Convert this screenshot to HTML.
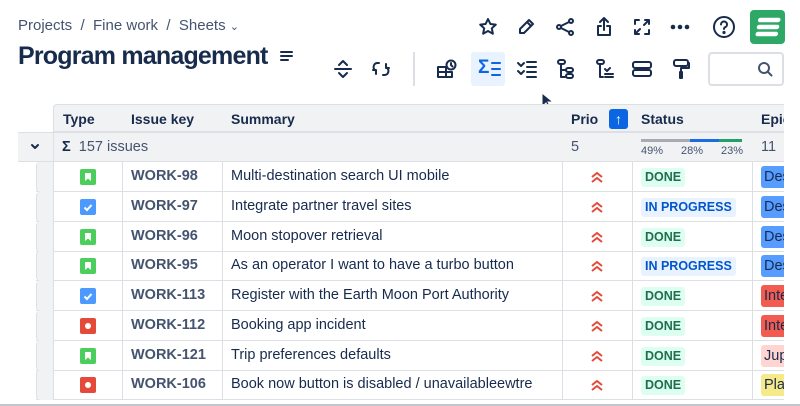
<!DOCTYPE html>
<html><head><meta charset="utf-8"><style>
*{margin:0;padding:0;box-sizing:border-box}
html,body{width:800px;height:406px;overflow:hidden}
body{background:#fff;font-family:"Liberation Sans",sans-serif;color:#172B4D;position:relative}
.a{position:absolute}
svg.i{position:absolute;fill:none;stroke:#172B4D;stroke-width:2;stroke-linecap:round;stroke-linejoin:round}
.hd{position:absolute;top:104px;height:28px;background:#F1F2F4;border-right:1px solid #DCDFE4;border-bottom:1px solid #DCDFE4;font-weight:bold;font-size:14px;line-height:28px;padding-left:9px}
.row{position:absolute;left:36px;width:748px;height:30px;border-bottom:1px solid #DCDFE4}
.c{position:absolute;top:0;height:30px;border-right:1px solid #DCDFE4;font-size:14.5px;line-height:29px;white-space:nowrap}
.key{color:#44546F;font-weight:bold;padding-left:9px}
.lz{font-size:12.5px;font-weight:bold;padding:2px 4px;border-radius:3px;position:absolute;top:6px;left:9px;line-height:15px}
.done{background:#DCFFF1;color:#216E4E}
.prog{background:#E9F2FF;color:#0055CC}
.ep{position:absolute;left:9px;top:4px;width:40px;height:22px;border-radius:3px;font-size:14.5px;line-height:22px;padding-left:3px;color:#172B4D}
</style></head><body>
<div class="a" style="left:18px;top:17px;font-size:15px;color:#44546F">Projects &nbsp;/&nbsp; Fine work &nbsp;/&nbsp; Sheets <span style="font-size:11px">&#8964;</span></div>
<div class="a" style="left:18px;top:42px;font-size:25px;font-weight:bold;letter-spacing:-0.8px">Program management</div>
<svg class="i" style="left:279px;top:48px" width="16" height="16" viewBox="0 0 16 16"><path d="M2 4h11M2 8h11M2 12h7"/></svg>
<svg class="i" style="left:478px;top:17px" width="20" height="20" viewBox="0 0 20 20"><path d="M10 2l2.4 5 5.4.6-4 3.7 1.1 5.4L10 14l-4.9 2.7 1.1-5.4-4-3.7 5.4-.6z"/></svg>
<svg class="i" style="left:516px;top:17px" width="20" height="20" viewBox="0 0 20 20"><path d="M13 3l4 4-9 9H4v-4z M11 5l4 4"/></svg>
<svg class="i" style="left:555px;top:17px" width="20" height="20" viewBox="0 0 20 20"><circle cx="4" cy="10" r="2"/><circle cx="16" cy="4" r="2"/><circle cx="16" cy="16" r="2"/><path d="M6 9l8-4M6 11l8 4"/></svg>
<svg class="i" style="left:594px;top:16px" width="20" height="22" viewBox="0 0 20 22"><path d="M10 2v12M6 6l4-4 4 4M7 10H4v9h12v-9h-3"/></svg>
<svg class="i" style="left:632px;top:17px" width="20" height="20" viewBox="0 0 20 20"><path d="M3 7V3h4M13 3h4v4M17 13v4h-4M7 17H3v-4M4 16l4-4M16 4l-4 4"/></svg>
<svg class="a" style="left:669px;top:23px" width="22" height="8"><circle cx="4" cy="4" r="2.3" fill="#172B4D"/><circle cx="11" cy="4" r="2.3" fill="#172B4D"/><circle cx="18" cy="4" r="2.3" fill="#172B4D"/></svg>
<svg class="i" style="left:712px;top:15px" width="24" height="24" viewBox="0 0 24 24"><circle cx="12" cy="12" r="10"/><path d="M9 9.5a3 3 0 1 1 4 2.8c-.7.3-1 .9-1 1.7"/><circle cx="12" cy="17.5" r=".6" fill="#172B4D"/></svg>
<div class="a" style="left:750px;top:10px;width:35px;height:34px;background:#2EA866;border-radius:4px"></div>
<svg class="a" style="left:750px;top:10px" width="35" height="34" viewBox="0 0 35 34"><path d="M9 10h18M9 17h18M9 24h18" stroke="#fff" stroke-width="4.5" stroke-linecap="round" fill="none" transform="skewX(-10) translate(3 0)"/></svg>
<svg class="i" style="left:333px;top:59px" width="20" height="20" viewBox="0 0 20 20"><path d="M2 10h16M6 6l4-4 4 4M6 14l4 4 4-4"/></svg>
<svg class="i" style="left:371px;top:59px" width="20" height="20" viewBox="0 0 20 20"><path d="M8 4H6a4 4 0 0 0-2 7l1 1M5 15l0-4-3 0"/><path d="M12 16h2a4 4 0 0 0 2-7l-1-1M15 5l0 4 3 0"/></svg>
<div class="a" style="left:413px;top:52px;width:2px;height:34px;background:#DCDFE4"></div>
<svg class="i" style="left:436px;top:58px" width="22" height="22" viewBox="0 0 22 22"><path d="M2 9h8v10H2zM2 14h8M10 14h6v5h-6"/><circle cx="15" cy="7" r="4.5"/><path d="M15 5v2l1.5 1.5"/></svg>
<div class="a" style="left:471px;top:52px;width:34px;height:34px;background:#E9F2FF;border-radius:3px"></div>
<div class="a" style="left:478px;top:57px;font-size:19px;font-weight:bold;color:#0C66E4">&Sigma;</div>
<svg class="i" style="left:490px;top:60px;stroke:#0C66E4" width="12" height="18" viewBox="0 0 12 18"><path d="M2 3h8M2 9h8M2 15h8"/></svg>
<svg class="i" style="left:516px;top:59px" width="22" height="20" viewBox="0 0 22 20"><path d="M2 4l3 3 3-3M2 12l3 3 3-3M11 3h9M11 8h9M11 13h9M11 18h9"/></svg>
<svg class="i" style="left:556px;top:58px" width="20" height="22" viewBox="0 0 20 22"><rect x="2" y="2" width="7" height="4" rx="2"/><path d="M5 6v13h4M5 12h4"/><rect x="10" y="10" width="7" height="4" rx="2"/><rect x="10" y="16" width="7" height="4" rx="2"/></svg>
<svg class="i" style="left:595px;top:58px" width="20" height="22" viewBox="0 0 20 22"><rect x="2" y="2" width="7" height="4" rx="2"/><path d="M5 6v13h3M10 11l2 2 3-3M10 16h8M10 19h8"/></svg>
<svg class="i" style="left:631px;top:59px" width="22" height="20" viewBox="0 0 22 20"><rect x="2" y="3" width="18" height="6" rx="2"/><rect x="2" y="11" width="18" height="6" rx="2"/></svg>
<svg class="i" style="left:671px;top:58px" width="20" height="22" viewBox="0 0 20 22"><rect x="3" y="2" width="14" height="6" rx="2"/><path d="M17 5h1v5H10v4"/><rect x="9" y="14" width="2" height="6"/></svg>
<div class="a" style="left:708px;top:52px;width:76px;height:34px;border:2px solid #DCDFE4;border-radius:4px"></div>
<svg class="i" style="left:757px;top:61px;stroke:#44546F" width="16" height="16" viewBox="0 0 16 16"><circle cx="7" cy="7" r="5"/><path d="M11 11l3.5 3.5"/></svg>
<svg class="a" style="left:541px;top:92px" width="12" height="18" viewBox="0 0 12 18"><path d="M1 1v14l4-4 3 6 2-1-3-6h5z" fill="#172B4D" stroke="#fff" stroke-width="1"/></svg>
<div class="hd" style="left:53px;width:70px;border-left:1px solid #DCDFE4;border-top:1px solid #DCDFE4;border-top-left-radius:4px">Type</div>
<div class="hd" style="left:122px;width:101px;border-top:1px solid #DCDFE4">Issue key</div>
<div class="hd" style="left:222px;width:341px;border-top:1px solid #DCDFE4">Summary</div>
<div class="hd" style="left:562px;width:71px;border-top:1px solid #DCDFE4">Prio<span style="position:absolute;left:47px;top:4px;width:19px;height:20px;background:#0C66E4;border-radius:3px;color:#fff;text-align:center;line-height:20px;font-size:14px">&uarr;</span></div>
<div class="hd" style="left:632px;width:121px;border-top:1px solid #DCDFE4">Status</div>
<div class="hd" style="left:752px;width:32px;border-top:1px solid #DCDFE4;border-right:none;overflow:hidden;white-space:nowrap">Epic</div>
<div class="a" style="left:18px;top:132px;width:766px;height:30px;background:#F1F2F4;border-bottom:1px solid #DCDFE4;border-top:1px solid #DCDFE4"></div>
<div class="a" style="left:53px;top:132px;width:1px;height:30px;background:#DCDFE4"></div>
<svg class="i" style="left:30px;top:143px" width="10" height="8" viewBox="0 0 10 8"><path d="M2 2l3 3 3-3"/></svg>
<div class="a" style="left:62px;top:139px;font-size:14.5px"><b>&Sigma;</b>&nbsp; <span style="color:#44546F">157 issues</span></div>
<div class="a" style="left:571px;top:139px;font-size:14.5px;color:#44546F">5</div>
<div class="a" style="left:641px;top:139px;width:49px;height:3px;background:#A6AAB2"></div>
<div class="a" style="left:690px;top:139px;width:29px;height:3px;background:#1D6AE5"></div>
<div class="a" style="left:719px;top:139px;width:23px;height:3px;background:#22A06B"></div>
<div class="a" style="left:641px;top:145px;font-size:11px;color:#44546F;width:102px;display:flex;justify-content:space-between"><span>49%</span><span>28%</span><span>23%</span></div>
<div class="a" style="left:761px;top:139px;font-size:14.5px;color:#44546F">11</div>
<div id="rows"></div>
<div class="a" style="left:784px;top:100px;width:16px;height:306px;background:#fff"></div>
<script>
var d=[["s","WORK-98","Multi-destination search UI mobile",0,"#579DFF","Des"],
["t","WORK-97","Integrate partner travel sites",1,"#579DFF","Des"],
["s","WORK-96","Moon stopover retrieval",0,"#579DFF","Des"],
["s","WORK-95","As an operator I want to have a turbo button",1,"#579DFF","Des"],
["t","WORK-113","Register with the Earth Moon Port Authority",0,"#F15B50","Inte"],
["b","WORK-112","Booking app incident",0,"#F15B50","Inte"],
["s","WORK-121","Trip preferences defaults",0,"#FFD5D2","Jup"],
["b","WORK-106","Book now button is disabled / unavailableewtre",0,"#F5E989","Pla"]];
var h="";
d.forEach(function(r,i){var y=162+i*29.75;
var ic=r[0]=="s"?'<rect x="0" y="0" width="16" height="16" rx="2" fill="#4BCE5B"/><path d="M5 4h6v8l-3-2.5L5 12z" fill="#fff"/>':r[0]=="t"?'<rect x="0" y="0" width="16" height="16" rx="2" fill="#4C9AFF"/><path d="M4.5 8.5l2.5 2.5 4.5-5" stroke="#fff" stroke-width="2" fill="none"/>':'<rect x="0" y="0" width="16" height="16" rx="2" fill="#E5493A"/><circle cx="8" cy="8" r="3" fill="#fff"/>';
h+='<div class="row" style="top:'+y+'px">'+
'<div class="c" style="left:0;width:18px;background:#F1F2F4;border-left:1px solid #DCDFE4;border-radius:4px 0 0 4px"></div>'+
'<div class="c" style="left:17px;width:70px"><svg class="a" style="left:27px;top:7px" width="16" height="16">'+ic+'</svg></div>'+
'<div class="c key" style="left:86px;width:101px">'+r[1]+'</div>'+
'<div class="c" style="left:186px;width:341px;padding-left:9px">'+r[2]+'</div>'+
'<div class="c" style="left:526px;width:71px"><svg class="a" style="left:28px;top:9px" width="14" height="12" viewBox="0 0 14 12"><path d="M2 6l5-4 5 4M2 11l5-4 5 4" stroke="#E5493A" stroke-width="2" fill="none"/></svg></div>'+
'<div class="c" style="left:596px;width:121px">'+(r[3]?'<span class="lz prog">IN PROGRESS</span>':'<span class="lz done">DONE</span>')+'</div>'+
'<div class="c" style="left:716px;width:32px;border-right:none;overflow:hidden">'+'<span class="ep" style="background:'+r[4]+'">'+r[5]+'</span>'+'</div></div>';});
document.getElementById("rows").innerHTML=h;
</script>
<div class="a" style="left:0;top:404px;width:800px;height:2px;background:#C1C7D0"></div>
</body></html>
